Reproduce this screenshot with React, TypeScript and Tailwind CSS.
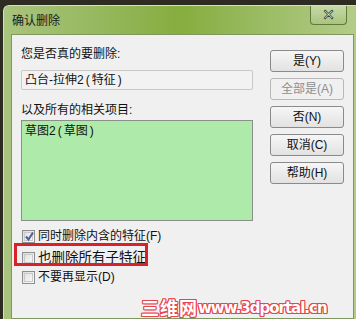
import React from 'react';

const cjk = "font-['Liberation_Sans','Noto_Sans_CJK_SC',sans-serif]";

function Checkbox({ checked }: { checked?: boolean }) {
  return (
    <span className="relative w-[13px] h-[13px] border border-[#8e8f8f] bg-gradient-to-br from-[#dcdcdc] to-[#fbfbfb] flex items-center justify-center shrink-0">
      <span className="w-[9px] h-[9px] border border-[#c9cacb] bg-gradient-to-br from-[#e3e3e3] to-[#f7f7f7]" />
      {checked && (
        <svg className="absolute left-[1px] top-[0px]" width="11" height="11" viewBox="0 0 11 11">
          <path d="M2 5.5 L4.5 8.5 L9 1.5" fill="none" stroke="#4a5f97" strokeWidth="2" />
        </svg>
      )}
    </span>
  );
}

function Btn({ label, disabled }: { label: string; disabled?: boolean }) {
  return (
    <div
      className={`w-[74px] h-[22px] rounded-[3px] border flex items-center justify-center text-[12px] ${
        disabled
          ? 'border-[#b8b8b8] bg-[#f0f0f0] text-[#8e8e8e]'
          : 'border-[#8a8a8a] bg-gradient-to-b from-[#f6f6f6] to-[#e2e2e2] text-[#111]'
      }`}
    >
      {label}
    </div>
  );
}

export default function App() {
  return (
    <div className={`w-[356px] h-[319px] bg-[#2e2c22] pt-[5px] pl-[3px] overflow-hidden ${cjk}`}>
      <div className="w-[353px] h-[314px] flex flex-col rounded-tl-[6px] border-l border-t border-[#d6e0c0] bg-gradient-to-r from-[#a9c47e] via-[#86ad3e] to-[#b3cc88]">
        {/* title bar */}
        <div className="h-[28px] flex items-start shrink-0">
          <span className="pl-[8px] pt-[8px] text-[12px] leading-[14px] text-[#1a1a1a]">确认删除</span>
          <div className="ml-auto mr-[9px] w-[37px] h-[19px] border border-t-0 border-[#5f7a3a] rounded-b-[4px] bg-gradient-to-b from-[#c6d9a6] to-[#a9c47e] flex items-center justify-center">
            <span className="text-[15px] leading-none font-bold text-white [-webkit-text-stroke:0.8px_#3c3c3c] font-['DejaVu_Sans',sans-serif]">✕</span>
          </div>
        </div>
        {/* client */}
        <div className="ml-[7px] mr-[2px] flex-1 bg-[#f0f0f0] border border-[#7e9860] relative flex">
          <div className="pl-[9px] pt-[11px] w-[250px] flex flex-col">
            <div className="text-[12px] leading-[16px] text-[#111]">您是否真的要删除:</div>
            <div className="mt-[8px] w-[232px] h-[20px] border border-[#c9c9c9] rounded-[2px] bg-[#f2f2f2] pl-[3px] flex items-center text-[12px] text-[#111]">
              凸台-拉伸2<span className="mx-[2px]">(</span>特征<span className="ml-[2px]">)</span>
            </div>
            <div className="mt-[12px] text-[12px] leading-[16px] text-[#111]">以及所有的相关项目:</div>
            <div className="mt-[2px] w-[232px] h-[101px] border border-[#8a8f8a] bg-[#aeeaaa] pl-[3px] pt-[2px] text-[12px] leading-[16px] text-[#111]">
              草图2<span className="mx-[2px]">(</span>草图<span className="ml-[2px]">)</span>
            </div>
            <div className="mt-[8px] flex items-center gap-[3px] pl-[1px] h-[14px] text-[12px] text-[#111]">
              <Checkbox checked />
              <span>同时删除内含的特征(F)</span>
            </div>
            <div className="mt-[7px] flex items-center gap-[3px] pl-[1px] h-[16px] text-[13.5px] text-[#111]">
              <Checkbox />
              <span>也删除所有子特征</span>
            </div>
            <div className="mt-[3px] flex items-center gap-[3px] pl-[1px] h-[16px] text-[12px] text-[#111]">
              <Checkbox />
              <span>不要再显示(D)</span>
            </div>
          </div>
          <div className="ml-[8px] pt-[15px] flex flex-col gap-[6px]">
            <Btn label="是(Y)" />
            <Btn label="全部是(A)" disabled />
            <Btn label="否(N)" />
            <Btn label="取消(C)" />
            <Btn label="帮助(H)" />
          </div>
          {/* annotation box */}
          <div className="absolute left-[2px] top-[208px] w-[134px] h-[23px] border-[3px] border-[#d8222a]" />
          {/* watermark */}
          <div className="absolute left-[129px] top-[263px] flex items-end text-white [text-shadow:1px_0_#e8444c,-1px_0_#e8444c,0_1px_#e8444c,0_-1px_#e8444c,1px_1px_#e8444c,-1px_-1px_#e8444c,1px_-1px_#e8444c,-1px_1px_#e8444c]">
            <span className="text-[18px] leading-[19px] font-bold font-['Noto_Sans_CJK_SC',sans-serif] tracking-[1px]">三维网</span>
            <span className="text-[15px] leading-[17px] font-bold font-['DejaVu_Sans',sans-serif] tracking-[-1px]">www.3dportal.cn</span>
          </div>
        </div>
      </div>
    </div>
  );
}
